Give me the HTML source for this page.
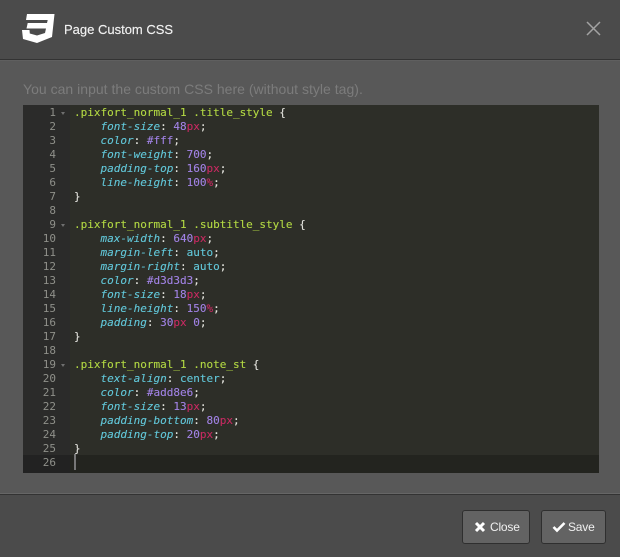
<!DOCTYPE html>
<html><head><meta charset="utf-8"><style>
*{box-sizing:border-box}
html,body{margin:0;padding:0}
body{width:620px;height:557px;overflow:hidden;position:relative;background:#585858;font-family:"Liberation Sans",sans-serif}
.hd{position:absolute;left:0;top:0;width:620px;height:60px;background:#4b4b4b;border-bottom:1px solid #333}
.hd2{position:absolute;left:0;top:60px;width:620px;height:1px;background:#5f5f5f}
.title{position:absolute;left:64px;top:22px;font-size:13px;line-height:16px;color:#f2f2f2;-webkit-text-stroke:.15px #f2f2f2}
.hint{position:absolute;left:23px;top:81px;font-size:14px;line-height:16px;color:#7c7c7c;letter-spacing:.02px}
.ed{position:absolute;left:23px;top:105px;width:576px;height:368px;background:#2d2e28;overflow:hidden}
.gut{position:absolute;left:0;top:0;width:47px;height:368px;background:#2b2b2a}
.act{position:absolute;left:0;top:350px;width:576px;height:18px;background:#23241f}
.actg{position:absolute;left:0;top:350px;width:47px;height:18px;background:#222}
.cur{position:absolute;left:51px;top:349px;width:2px;height:16px;background:#777}
pre{margin:0;position:absolute;top:1px;font-family:"DejaVu Sans Mono","Liberation Mono",monospace;font-size:11px;line-height:14px;-webkit-text-stroke:.1px}
.n{left:0;top:1px;width:33px;text-align:right;color:#8f908a;-webkit-text-stroke:0}
.c{left:51px;color:#e4e4de}
.fold{position:absolute;left:38px;width:0;height:0;border-left:2.5px solid transparent;border-right:2.5px solid transparent;border-top:3px solid #6f6f6f}
.s{color:#b3d943}.p{color:#62c8da;font-style:italic}.v{color:#a283e6}.u{color:#c92a62}.k{color:#62c8da}
.ft{position:absolute;left:0;top:494px;width:620px;height:63px;background:#4b4b4b;border-top:1px solid #333}
.ft2{position:absolute;left:0;top:493px;width:620px;height:1px;background:#666}
.btn{position:absolute;top:510px;height:34px;background:#636363;border:1px solid #2f2f2f;border-radius:3px;color:#f0f0f0;font-size:12px;line-height:32px}
.btn svg{position:absolute;top:10px}
.btn span{position:absolute;top:0;letter-spacing:-.2px}
</style></head><body>
<div class="hd"></div><div class="hd2"></div>
<svg style="position:absolute;left:22px;top:14px" width="33" height="30" viewBox="0 0 33 30"><path fill="#fff" d="M5 0H32.5L30 23L15 29L1 25L0 16H7.5L7.8 19.5L15 21.5L23 19L24 14.5H4.5L5.7 9H25L25.7 6H4Z" /></svg>
<div class="title">Page Custom CSS</div>
<svg style="position:absolute;left:586px;top:21px" width="15" height="15" viewBox="0 0 15 15"><path d="M1 1L14 14M14 1L1 14" stroke="#a3a3a3" stroke-width="1.5" fill="none"/></svg>
<div class="hint">You can input the custom CSS here (without style tag).</div>
<div class="ed">
<div class="gut"></div><div class="act"></div><div class="actg"></div>
<pre class="n">1
2
3
4
5
6
7
8
9
10
11
12
13
14
15
16
17
18
19
20
21
22
23
24
25
26</pre>
<i class="fold" style="top:7px"></i><i class="fold" style="top:119px"></i><i class="fold" style="top:259px"></i>
<div class="cur"></div>
<pre class="c"><span class="s">.pixfort_normal_1 .title_style</span> {
    <span class="p">font-size</span>: <span class="v">48</span><span class="u">px</span>;
    <span class="p">color</span>: <span class="v">#fff</span>;
    <span class="p">font-weight</span>: <span class="v">700</span>;
    <span class="p">padding-top</span>: <span class="v">160</span><span class="u">px</span>;
    <span class="p">line-height</span>: <span class="v">100</span><span class="u">%</span>;
}

<span class="s">.pixfort_normal_1 .subtitle_style</span> {
    <span class="p">max-width</span>: <span class="v">640</span><span class="u">px</span>;
    <span class="p">margin-left</span>: <span class="k">auto</span>;
    <span class="p">margin-right</span>: <span class="k">auto</span>;
    <span class="p">color</span>: <span class="v">#d3d3d3</span>;
    <span class="p">font-size</span>: <span class="v">18</span><span class="u">px</span>;
    <span class="p">line-height</span>: <span class="v">150</span><span class="u">%</span>;
    <span class="p">padding</span>: <span class="v">30</span><span class="u">px</span> <span class="v">0</span>;
}

<span class="s">.pixfort_normal_1 .note_st</span> {
    <span class="p">text-align</span>: <span class="k">center</span>;
    <span class="p">color</span>: <span class="v">#add8e6</span>;
    <span class="p">font-size</span>: <span class="v">13</span><span class="u">px</span>;
    <span class="p">padding-bottom</span>: <span class="v">80</span><span class="u">px</span>;
    <span class="p">padding-top</span>: <span class="v">20</span><span class="u">px</span>;
}</pre>
</div>
<div class="ft2"></div><div class="ft"></div>
<div class="btn" style="left:462px;width:68px"><svg style="left:11px" width="12" height="12" viewBox="0 0 12 12"><path d="M2 2L10 10M10 2L2 10" stroke="#fff" stroke-width="3" fill="none"/></svg><span style="left:27px">Close</span></div>
<div class="btn" style="left:541px;width:65px"><svg style="left:10px" width="14" height="12" viewBox="0 0 14 12"><path d="M1.5 6L5 9.5L12.5 2" stroke="#fff" stroke-width="2.6" fill="none"/></svg><span style="left:26px">Save</span></div>
</body></html>
